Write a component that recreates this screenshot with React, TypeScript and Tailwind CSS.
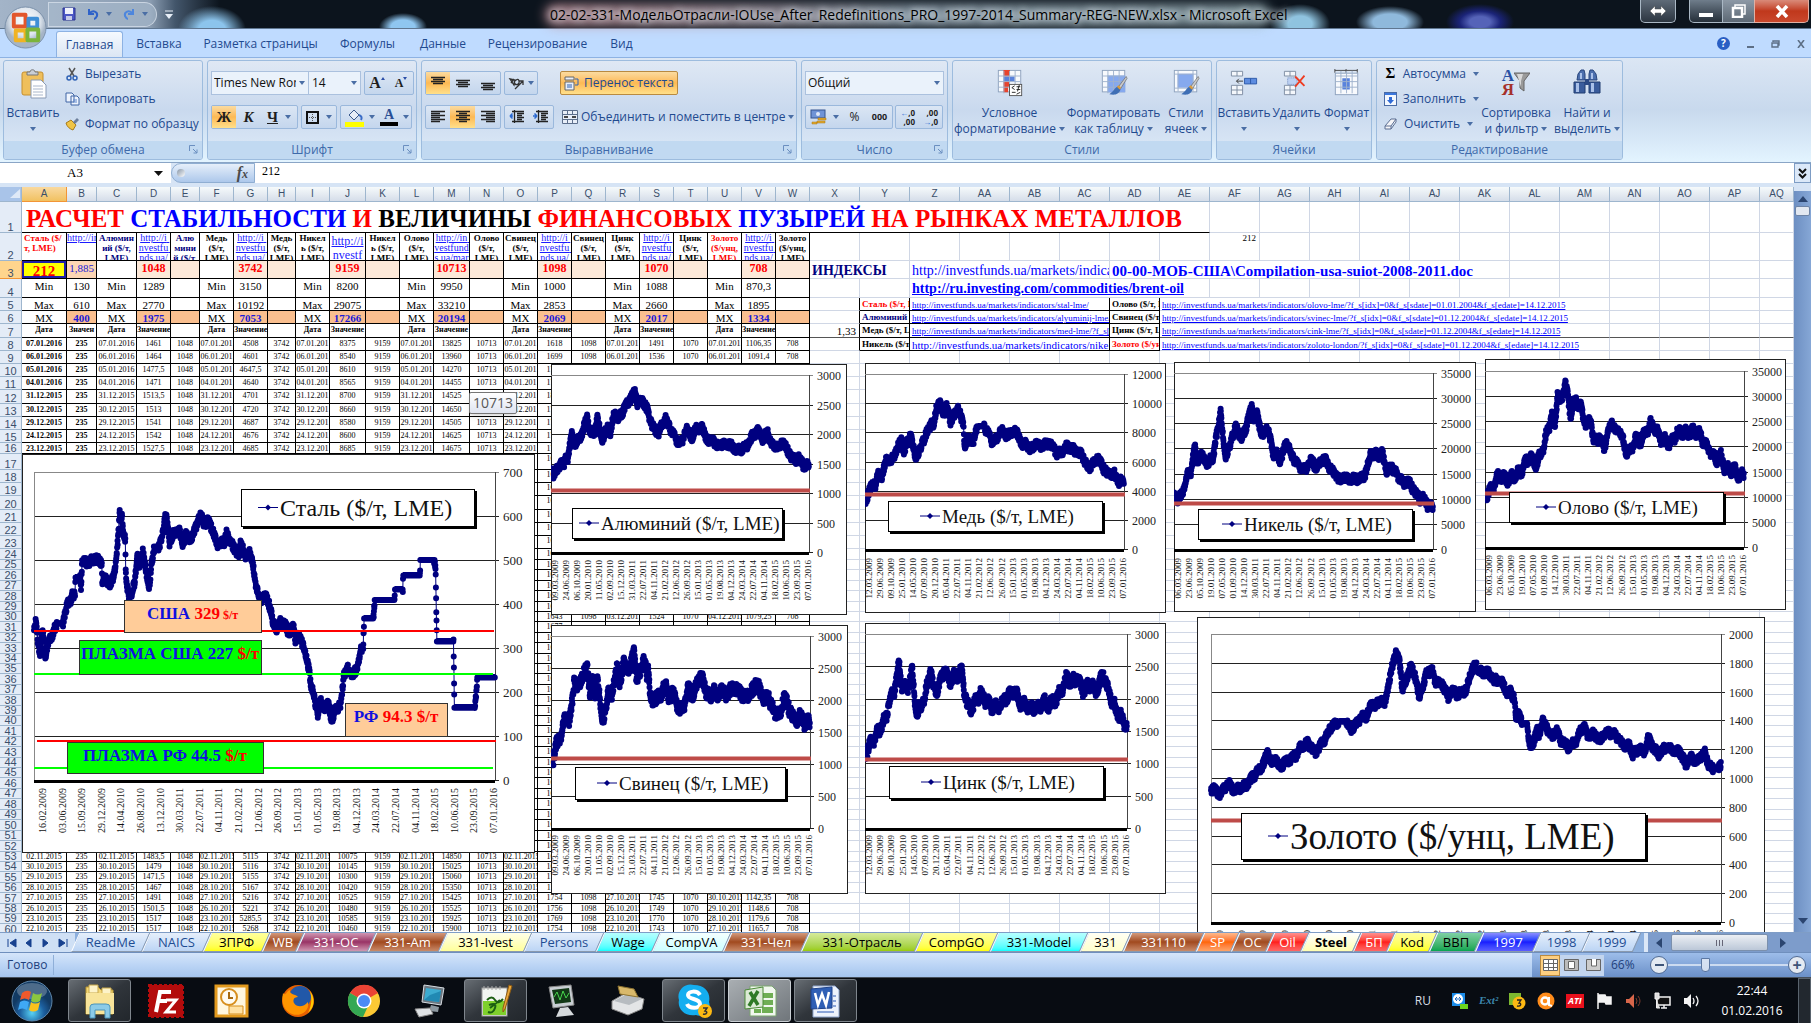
import type { ReactNode } from "react";
import clsx from "clsx";

/* ---------- sheet data ---------- */

const colWidths = [
  "w-[22px]", "w-[45px]", "w-[30px]", "w-[40px]", "w-[34px]", "w-[29px]", "w-[34px]", "w-[34px]", "w-[28px]",
  "w-[34px]", "w-[36px]", "w-[34px]", "w-[34px]", "w-[36px]", "w-[34px]", "w-[34px]", "w-[34px]", "w-[34px]",
  "w-[34px]", "w-[34px]", "w-[34px]", "w-[34px]", "w-[34px]", "w-[34px]",
];

const letters = "ABCDEFGHIJKLMNOPQRSTUVWXYZ".split("");
const columns = [...letters, ...letters.slice(0, 17).map((l) => "A" + l)];

const rowHeights = [
  31, 28, 18, 19, 13, 13, 14, 13, 13, 13, 13, 14, 13, 13, 13, 11, 16, 13, 13, 14, 13, 13, 13, 11,
  10, 11, 10, 11, 10, 10, 11, 10, 11, 10, 10, 11, 10, 11, 10, 10, 11, 10, 11, 10, 10, 11, 10, 11, 10, 11, 10, 11,
  10, 10, 11, 10, 11, 10, 10, 11,
];

const topDates = ["07.01.2016", "06.01.2016", "05.01.2016", "04.01.2016", "31.12.2015", "30.12.2015", "29.12.2015", "24.12.2015", "23.12.2015"];
const topValues: Record<string, string[]> = {
  D: ["1461", "1464", "1477,5", "1471", "1513,5", "1513", "1541", "1542", "1527,5"],
  G: ["4508", "4601", "4647,5", "4640", "4701", "4720", "4687", "4676", "4685"],
  J: ["8375", "8540", "8610", "8565", "8700", "8660", "8580", "8600", "8685"],
  M: ["13825", "13960", "14270", "14455", "14525", "14650", "14505", "14625", "14675"],
  P: ["1618", "1699", "1741", "1765", "1801", "1797", "1734", "1709", "1712"],
  S: ["1491", "1536"],
  V: ["1106,35", "1091,4"],
};

const lowDates = ["02.11.2015", "30.10.2015", "29.10.2015", "28.10.2015", "27.10.2015", "26.10.2015", "23.10.2015", "22.10.2015"];
const lowValues: Record<string, string[]> = {
  D: ["1483,5", "1479", "1471,5", "1467", "1491", "1501,5", "1517", "1517"],
  G: ["5115", "5116", "5155", "5167", "5216", "5221", "5285,5", "5268"],
  J: ["10075", "10145", "10300", "10420", "10525", "10480", "10585", "10460"],
  M: ["14850", "15025", "15060", "15350", "15425", "15525", "15925", "15900"],
  P: ["1680", "1690", "1702", "1711", "1754", "1756", "1769", "1754"],
  S: ["", "", "", "", "1745", "1749", "1770", "1743"],
  V: ["", "", "", "", "1142,35", "1148,6", "1179,6", "1165,7"],
};

const constants: Record<string, string> = { B: "235", E: "1048", H: "3742", K: "9159", N: "10713", Q: "1098", T: "1070", W: "708" };
const rowThirty: Record<string, string> = { P: "1643", Q: "1098", R: "03.12.201", S: "1524", T: "1070", U: "04.12.2015", V: "1079,25", W: "708" };

const headings: Record<string, string> = {
  A: "Сталь ($/т,\u00a0LME)", B: "http://in", C: "Алюмин ий ($/т, LME)", D: "http://i nvestfu nds.ua/", E: "Алю мини й ($/т,",
  F: "Медь ($/т, LME)", G: "http://i nvestfu nds.ua/", H: "Медь ($/т, LME)", I: "Никел ь ($/т, LME)", J: "http://i nvestf",
  K: "Никел ь ($/т, LME)", L: "Олово ($/т, LME)", M: "http://in vestfund s.ua/mar", N: "Олово ($/т, LME)", O: "Свинец ($/т, LME)",
  P: "http://i nvestfu nds.ua/", Q: "Свинец ($/т, LME)", R: "Цинк ($/т, LME)", S: "http://i nvestfu nds.ua/", T: "Цинк ($/т, LME)",
  U: "Золото ($/унц, LME)", V: "http://i nvestfu nds.ua/", W: "Золото ($/унц, LME)",
};

const targets: Record<string, string> = { B: "1,885", D: "1048", G: "3742", J: "9159", M: "10713", P: "1098", S: "1070", V: "708" };
const minimums: Record<string, string> = { B: "130", D: "1289", G: "3150", J: "8200", M: "9950", P: "1000", S: "1088", V: "870,3" };
const maximums: Record<string, string> = { B: "610", D: "2770", G: "10192", J: "29075", M: "33210", P: "2853", S: "2660", V: "1895" };
const means: Record<string, string> = { B: "400", D: "1975", G: "7053", J: "17266", M: "20194", P: "2069", S: "2017", V: "1334" };

const labelCols = "ACFILORU";
const valueCols = "BDGJMPSV";
const levelCols = "EHKNQTW";

const base = "http://investfunds.ua/markets/indicators/";
const indexLinks = [
  { a: "Сталь ($/т, LME)", aClass: "text-[#f00]", b: base + "stal-lme/", c: "Олово ($/т, LME)", cClass: "", d: base + "olovo-lme/?f_s[idx]=0&f_s[sdate]=01.01.2004&f_s[edate]=14.12.2015" },
  { a: "Алюминий ($/т)", aClass: "text-[#000080]", b: base + "alyuminij-lme/?f_s[idx]=0", c: "Свинец ($/т, LME)", cClass: "", d: base + "svinec-lme/?f_s[idx]=0&f_s[sdate]=01.12.2004&f_s[edate]=14.12.2015" },
  { a: "Медь ($/т, LME)", aClass: "", b: base + "med-lme/?f_s[idx]=0", c: "Цинк ($/т, LME)", cClass: "", d: base + "cink-lme/?f_s[idx]=0&f_s[sdate]=01.12.2004&f_s[edate]=14.12.2015" },
  { a: "Никель ($/т, LME)", aClass: "", b: base + "nikel-lme/?f_s[idx]=0", c: "Золото ($/унц)", cClass: "text-[#f00]", d: base + "zoloto-london/?f_s[idx]=0&f_s[sdate]=01.12.2004&f_s[edate]=14.12.2015" },
];

/* ---------- sheet cells ---------- */

function cellContent(col: string, row: number): { text: string; cls: string; link?: boolean } {
  const isLabel = labelCols.includes(col);
  const isValue = valueCols.includes(col);
  if (row === 2) {
    if (isValue) return { text: headings[col], link: true, cls: col === "J" ? "text-[12px] leading-[14px] pt-[1px]" : "text-[10px] leading-[10px] whitespace-pre-wrap" };
    return {
      text: headings[col],
      cls: clsx("text-[9px] leading-[10px] font-bold", col === "A" && "text-left pl-[2px]", "AU".includes(col) && "text-[#f00]", "CE".includes(col) && "text-[#000080]"),
    };
  }
  if (row === 3) {
    if (col === "A") return { text: "212", cls: "pt-[2px] text-[15px] leading-[17px] font-bold text-[#f00]" };
    if (col === "B") return { text: "1,885", cls: "text-[11px] leading-[14px] text-[#1b1bd8]" };
    return { text: targets[col] ?? "", cls: "text-[12px] leading-[15px] font-bold text-[#f00]" };
  }
  if (row === 4) return { text: isLabel ? "Min" : minimums[col] ?? "", cls: "text-[11px] leading-[15px]" };
  if (row === 5) return { text: isLabel ? "Max" : maximums[col] ?? "", cls: "text-[11px] leading-[15px]" };
  if (row === 6) return { text: isLabel ? "MX" : means[col] ?? "", cls: clsx("text-[11px] leading-[15px]", isValue && "font-bold text-[#1b1bd8]") };
  if (row === 7) return { text: isLabel ? "Дата" : isValue ? (col === "B" ? "Значен" : "Значение") : "", cls: "text-[8px] leading-[11px] font-bold" };

  const bold = col === "A" || (col === "B" && row < 17);
  const cls = clsx("text-[8px] leading-[11px]", bold && "font-bold");
  if (row < 17) {
    const i = row - 8;
    if (isLabel) return { text: "AC".includes(col) ? topDates[i] : topDates[i].slice(0, 9), cls };
    return { text: constants[col] ?? topValues[col]?.[i] ?? "", cls };
  }
  if (row > 52) {
    const i = row - 53;
    const small = "text-[8px] leading-[10px]";
    if (col === "U") return { text: ["", "", "", "", "30.10.2015", "29.10.2015", "28.10.2015", "27.10.2015"][i], cls: small };
    if (isLabel) return { text: lowDates[i], cls: small };
    return { text: constants[col] ?? lowValues[col]?.[i] ?? "", cls: small };
  }
  if (row === 30 && rowThirty[col]) return { text: rowThirty[col], cls: "text-[8px] leading-[10px]" };
  if (col === "P") return { text: String(1610 + ((row * 37) % 90)), cls: "text-[8px] leading-[10px]" };
  return { text: "", cls: "" };
}

function fillFor(col: string, row: number) {
  if (row === 3) {
    if (col === "A") return "bg-[#ff0] shadow-[inset_0_0_0_2px_#1f1fa8]";
    if (col === "B") return "bg-[#fcd5b4]";
    if ((valueCols + levelCols).includes(col)) return "bg-[#fde9d9]";
  }
  if (row === 6 && (valueCols + levelCols).includes(col)) return "bg-[#fabf8f]";
  return "bg-white";
}

function Clip({ h, className, children }: { h: number; className?: string; children?: ReactNode }) {
  return <div style={{ height: h - 1 }} className={clsx("overflow-hidden", className)}>{children}</div>;
}

function BlankCells({ from, to, h, frozen }: { from: number; to: number; h: number; frozen?: boolean }) {
  return (
    <>
      {columns.slice(from, to).map((c) => (
        <td key={c} className={clsx("border-r border-b border-r-[#d0d7e5]", frozen ? "border-b-[#555]" : "border-b-[#d0d7e5]")}>
          <Clip h={h} />
        </td>
      ))}
    </>
  );
}

// columns X and onward (index 23)
function RightCells({ row, h }: { row: number; h: number }) {
  const frozen = row === 7;
  const line = "border-r border-b border-[#d0d7e5]";
  if (row === 2) {
    return (
      <>
        <BlankCells from={23} to={31} h={h} />
        <td className={line}><Clip h={h} className="pr-[3px] text-right text-[9px] leading-[10px]">212</Clip></td>
        <BlankCells from={32} to={43} h={h} />
      </>
    );
  }
  if (row === 3) {
    return (
      <>
        <td colSpan={2} className={line}><Clip h={h} className="pl-[2px] text-[14px] leading-[20px] font-bold whitespace-nowrap text-[#000080]">ИНДЕКСЫ</Clip></td>
        <td colSpan={4} className={line}><Clip h={h} className="pl-[2px] text-[14px] leading-[20px] whitespace-nowrap"><a href="#idx" className="text-[#00f]">http://investfunds.ua/markets/indicat</a></Clip></td>
        <td colSpan={8} className={line}><Clip h={h} className="pl-[2px] text-[15px] leading-[20px] font-bold whitespace-nowrap"><a href="#doc" className="text-[#00f]">00-00-МОБ-США\Compilation-usa-suiot-2008-2011.doc</a></Clip></td>
        <BlankCells from={37} to={43} h={h} />
      </>
    );
  }
  if (row === 4) {
    return (
      <>
        <BlankCells from={23} to={25} h={h} />
        <td colSpan={6} className={line}><Clip h={h} className="pl-[2px] text-[14px] leading-[19px] font-bold whitespace-nowrap"><a href="#brent" className="text-[#00f] underline">http://ru.investing.com/commodities/brent-oil</a></Clip></td>
        <BlankCells from={31} to={43} h={h} />
      </>
    );
  }
  if (row >= 5 && row <= 8) {
    const item = indexLinks[row - 5];
    const dark = "border-r border-b border-black";
    return (
      <>
        <td className={clsx("border-r border-r-black border-b", frozen ? "border-b-[#555]" : "border-b-[#d0d7e5]")}>
          <Clip h={h} className="pr-[3px] text-right text-[11px] leading-[15px]">{frozen && "1,33"}</Clip>
        </td>
        <td className={dark}><Clip h={h} className={clsx("pl-[2px] text-[9px] leading-[13px] font-bold whitespace-nowrap", item.aClass)}>{item.a}</Clip></td>
        <td colSpan={4} className={dark}>
          <Clip h={h} className={clsx("pl-[2px] whitespace-nowrap", row === 8 ? "text-[11px] leading-[15px]" : "text-[9px] leading-[14px]")}><a href="#a" className="text-[#00f] underline">{item.b}</a></Clip>
        </td>
        <td className={dark}><Clip h={h} className={clsx("pl-[2px] text-[9px] leading-[13px] font-bold whitespace-nowrap", item.cClass)}>{item.c}</Clip></td>
        <td colSpan={9} className={clsx("border-r border-b border-r-[#d0d7e5]", frozen ? "border-b-[#555]" : "border-b-[#d0d7e5]")}>
          <Clip h={h} className="pl-[2px] text-[9px] leading-[14px] whitespace-nowrap"><a href="#b" className="text-[#00f] underline">{item.d}</a></Clip>
        </td>
        <BlankCells from={39} to={43} h={h} frozen={frozen} />
      </>
    );
  }
  return <BlankCells from={23} to={43} h={h} frozen={frozen} />;
}

function SheetTable() {
  return (
    <table className="w-full table-fixed border-separate border-spacing-0 font-['Liberation_Serif','Times_New_Roman',serif] text-black">
      <colgroup>
        {colWidths.map((w, i) => <col key={i} className={w} />)}
        {columns.slice(23, 42).map((c) => <col key={c} className="w-[50px]" />)}
        <col />
      </colgroup>
      <thead>
        <tr className="h-[15px] font-['Liberation_Sans',Arial,sans-serif] text-[10px] leading-[14px] text-[#3b4f6b]">
          <th className="border-r border-b border-[#9eb6ce] bg-[#a9c4e9] p-0">
            <svg className="ml-auto block h-[10px] w-[12px]" viewBox="0 0 12 10"><path d="M11 0v9H1z" fill="#dfe9f7" /></svg>
          </th>
          {columns.map((c) => (
            <th key={c} scope="col" className={clsx("border-r border-b p-0 font-normal", c === "A" ? "border-[#f29536] bg-linear-to-b from-[#f9d99f] to-[#f1c15f]" : "border-[#9eb6ce] bg-linear-to-b from-[#f6fafb] to-[#d5dde9]")}>{c}</th>
          ))}
        </tr>
      </thead>
      <tbody>
        {rowHeights.map((h, i) => {
          const row = i + 1;
          return (
            <tr key={row} className="[&>td]:p-0">
              <th
                scope="row"
                className={clsx("border-r border-b p-0 align-bottom font-['Liberation_Sans',Arial,sans-serif] text-[11px] font-normal text-[#3b4f6b]", row === 3 ? "border-[#f29536] bg-[#ffd58d]" : "border-[#9eb6ce] bg-[#e4ecf7]")}
              >
                <div style={{ height: h - 1 }} className="flex items-end justify-center overflow-hidden leading-[10px]">{row}</div>
              </th>
              {row === 1 ? (
                <>
                  <td colSpan={31} className="border-r border-b border-r-[#d0d7e5] border-b-black">
                    <Clip h={h} className="pl-[4px] text-[25px] leading-[34px] font-bold whitespace-nowrap text-[#f00]">
                      РАСЧЕТ <span className="text-[#00f]">СТАБИЛЬНОСТИ</span> И <span className="text-black">ВЕЛИЧИНЫ</span> ФИНАНСОВЫХ <span className="text-[#00f]">ПУЗЫРЕЙ</span> НА РЫНКАХ МЕТАЛЛОВ
                    </Clip>
                  </td>
                  <BlankCells from={31} to={43} h={h} />
                </>
              ) : (
                <>
                  {columns.slice(0, 23).map((c) => {
                    const cell = cellContent(c, row);
                    return (
                      <td key={c} className={clsx("border-r border-b border-black text-center align-top", fillFor(c, row))}>
                        <Clip h={h} className={clsx(row > 2 && "whitespace-nowrap", cell.cls)}>
                          {cell.link ? <a href={"#" + c} className="text-[#1b1bff] underline">{cell.text}</a> : cell.text}
                        </Clip>
                      </td>
                    );
                  })}
                  <RightCells row={row} h={h} />
                </>
              )}
            </tr>
          );
        })}
      </tbody>
    </table>
  );
}

/* ---------- charts ---------- */

type ChartSpec = {
  title: string;
  place: string;
  w: number;
  h: number;
  plot: [number, number, number, number];
  max: number;
  step: number;
  level?: number;
  legend: [number, number, number, number];
  legendText: string;
  legendPad: number;
  tickText?: string;
  dateText?: string;
  dot: number;
  noise: number;
  wave: number;
  dates: string[];
  dateTop: number;
  points: number[];
};

const laterDates = ["22.07.2011", "04.11.2011", "21.02.2012", "12.06.2012", "26.09.2012", "15.01.2013", "01.05.2013", "19.08.2013", "04.12.2013", "24.03.2014", "22.07.2014", "04.11.2014", "18.02.2015", "10.06.2015", "23.09.2015", "07.01.2016"];
const steelDates = ["16.02.2009", "03.06.2009", "15.09.2009", "29.12.2009", "14.04.2010", "26.08.2010", "13.12.2010", "30.03.2011", ...laterDates];
const aluDates = ["09.03.2009", "24.06.2009", "06.10.2009", "20.01.2010", "11.05.2010", "02.09.2010", "15.12.2010", "31.03.2011", ...laterDates];
const copperDates = ["12.03.2009", "29.06.2009", "09.10.2009", "25.01.2010", "14.05.2010", "07.09.2010", "20.12.2010", "05.04.2011", ...laterDates];
const nickelDates = ["06.03.2009", "23.06.2009", "05.10.2009", "19.01.2010", "07.05.2010", "01.09.2010", "14.12.2010", "30.03.2011", ...laterDates];

// points are flat pairs: percent of the time axis, price
const charts: ChartSpec[] = [
  {
    title: "Сталь ($/т, LME)", place: "left-[22px] top-[267px]", w: 513, h: 399, plot: [12, 18, 473, 326], max: 700, step: 100,
    legend: [219, 35, 233, 37], legendText: "text-[24px]", legendPad: 17, tickText: "text-[13px]", dateText: "text-[10px]", dot: 6, noise: 4, wave: 1, dates: steelDates, dateTop: 334,
    points: [0, 340, 0.4, 360, 0.8, 320, 1.3, 285, 1.9, 340, 2.5, 275, 3, 310, 4, 330, 5, 355, 6.3, 355, 6.8, 385, 7.2, 400, 8, 405, 8.3, 425, 8.9, 420, 9, 460, 10, 460, 10.2, 435, 10.4, 490, 10.8, 500, 12, 492, 12.7, 503, 14.7, 497, 14.8, 450, 15.5, 460, 16.4, 440, 17.3, 465, 17.9, 500, 18.3, 560, 18.6, 608, 19.1, 600, 19.3, 565, 19.8, 545, 19.9, 470, 20.2, 440, 20.7, 415, 21.3, 425, 21.8, 450, 22.4, 510, 22.9, 480, 23.6, 520, 24.2, 480, 24.6, 455, 25, 440, 25.5, 490, 26, 520, 27.3, 532, 28, 565, 28.5, 602, 29, 580, 29.4, 540, 30.3, 560, 31.5, 568, 32.2, 535, 33, 560, 33.7, 545, 34.9, 565, 35.6, 592, 36.1, 602, 37, 580, 37.7, 592, 38.7, 570, 39.7, 535, 41.3, 540, 41.8, 572, 42.2, 545, 43, 538, 44.3, 507, 44.8, 538, 45.8, 510, 46.8, 515, 47.5, 490, 48, 450, 48.5, 425, 48.8, 405, 50.3, 418, 51, 400, 51.8, 360, 52.6, 340, 53.3, 360, 54.5, 352, 55.2, 335, 56.3, 345, 56.7, 320, 57.5, 332, 58.6, 300, 59.2, 270, 59.7, 250, 60.1, 215, 60.8, 185, 61.6, 150, 62.1, 180, 63.1, 165, 63.9, 172, 64.6, 135, 65.4, 160, 66.5, 172, 67, 215, 67.2, 240, 68, 252, 69.1, 240, 70.1, 250, 70.5, 275, 70.8, 293, 71.4, 300, 71.6, 367, 73.6, 367, 73.9, 409, 78.2, 409, 78.3, 433, 80, 433, 80.1, 465, 83.7, 465, 83.8, 500, 86.8, 500, 87.1, 485, 87.4, 315, 91, 315, 91.2, 164, 95.6, 164, 96.2, 233, 100, 233],
  },
  {
    title: "Алюминий ($/т, LME)", place: "left-[551px] top-[177px]", w: 296, h: 251, plot: [0, 11, 258, 188], max: 3000, step: 500, level: 1048,
    legend: [21, 144, 210, 30], legendText: "text-[19px]", legendPad: 7, dot: 6, noise: 4, wave: 1, dates: aluDates, dateTop: 196,
    points: [0, 1400, 1, 1320, 3, 1420, 4, 1550, 5, 1430, 5.5, 1620, 6.5, 1570, 8, 1990, 9.5, 1830, 12, 2000, 14, 2290, 15, 2020, 17, 2050, 18, 2260, 20, 1900, 22, 2130, 23, 2020, 24.5, 2350, 26, 2270, 28, 2400, 30, 2550, 32.5, 2700, 33.5, 2530, 35.5, 2570, 37.5, 2380, 39, 2170, 41.5, 2000, 44.5, 2270, 46, 2100, 49, 1870, 51, 1860, 52.5, 2110, 54.5, 1930, 56, 2090, 58.5, 2100, 61, 1870, 63, 1890, 64, 1800, 68, 1850, 72.5, 1720, 76, 1810, 78, 1960, 80, 2050, 82, 1920, 84, 2020, 85.5, 1820, 88.5, 1770, 90, 1870, 91.5, 1720, 94.5, 1550, 96, 1590, 98, 1460, 99.5, 1490, 100, 1470],
  },
  {
    title: "Медь ($/т, LME)", place: "left-[865px] top-[176px]", w: 301, h: 250, plot: [0, 11, 259, 186], max: 12000, step: 2000, level: 3742,
    legend: [23, 138, 214, 30], legendText: "text-[19px]", legendPad: 32, dot: 6, noise: 4, wave: 1, dates: copperDates, dateTop: 195,
    points: [0, 3300, 1.5, 3900, 3.5, 4600, 4, 4300, 5, 5100, 6.5, 4900, 8.5, 6300, 10, 6000, 12, 6700, 14, 7500, 15, 6500, 16, 7200, 17.5, 7800, 19.5, 6400, 21, 6600, 22, 7300, 23, 7600, 25, 8400, 26, 8700, 26.5, 8400, 27.5, 9700, 29, 9950, 30.5, 9300, 31.5, 9700, 33, 8800, 34.5, 9200, 36, 9700, 37, 9000, 38, 8500, 38.5, 7000, 40, 7600, 42, 7400, 43.5, 8400, 46, 8400, 47.5, 7900, 49, 7400, 51, 7500, 52.5, 8200, 54.5, 7800, 57, 8000, 58, 8100, 60, 7500, 61, 7000, 62, 7300, 63.5, 6800, 66, 7200, 68.5, 7100, 71, 7250, 73, 6900, 74, 6550, 76, 6700, 78, 7050, 81, 6750, 83.5, 6500, 85, 6000, 86, 5550, 88, 5800, 90, 6250, 91.5, 5700, 94, 5100, 96, 5200, 98, 4600, 99, 4700, 100, 4550],
  },
  {
    title: "Никель ($/т, LME)", place: "left-[1174px] top-[175px]", w: 302, h: 250, plot: [0, 11, 259, 187], max: 35000, step: 5000, level: 9159,
    legend: [24, 147, 214, 30], legendText: "text-[19px]", legendPad: 24, dot: 6, noise: 4, wave: 1, dates: nickelDates, dateTop: 196,
    points: [0, 11000, 1.5, 9600, 3, 11000, 4.5, 13000, 5.5, 15500, 6.5, 15000, 8, 20500, 9, 17500, 11, 18800, 13, 16500, 14, 18200, 15, 17500, 16.5, 23000, 18, 27000, 19, 22000, 20, 18500, 21, 19500, 22.5, 22500, 24, 24200, 26, 22000, 28, 24500, 30, 28500, 31, 25500, 32, 26800, 34, 22500, 36, 24200, 37.5, 21000, 38.5, 18500, 39.5, 19300, 41, 17500, 43.5, 21200, 45.5, 18500, 48, 16500, 51, 15600, 53, 18000, 54.5, 16200, 58, 18000, 61, 15500, 64, 13700, 65.5, 14300, 68, 14000, 71, 13900, 73.5, 14500, 75, 17000, 76, 19200, 77, 18400, 78, 19000, 79, 18500, 80.5, 19000, 82, 15400, 84, 16300, 86, 14900, 89, 12700, 90, 13700, 92.5, 11800, 95, 9900, 96.5, 10100, 98, 8600, 100, 8500],
  },
  {
    title: "Олово ($/т, LME)", place: "left-[1485px] top-[172px]", w: 301, h: 251, plot: [0, 12, 259, 188], max: 35000, step: 5000, level: 10713,
    legend: [24, 133, 214, 30], legendText: "text-[19px]", legendPad: 27, dot: 6, noise: 4, wave: 3, dates: nickelDates, dateTop: 196,
    points: [0, 10500, 2, 11000, 5, 14000, 9, 13500, 14, 15000, 17, 18000, 20, 16500, 22, 19000, 26, 26500, 27, 24500, 28, 30500, 29, 28500, 31, 32500, 33, 26500, 35, 29500, 37, 27500, 39, 24500, 41, 25000, 42, 20500, 44, 22000, 46, 19800, 49, 25000, 50.5, 22500, 52, 23500, 54, 19500, 56, 18800, 58, 21500, 60, 21000, 64, 24500, 66, 23500, 68, 21500, 72, 20500, 74, 23000, 77, 22600, 82, 23000, 85, 20500, 89, 17500, 91, 18000, 93, 15300, 96, 15500, 98, 14300, 100, 14200],
  },
  {
    title: "Свинец ($/т, LME)", place: "left-[551px] top-[438px]", w: 297, h: 269, plot: [0, 11, 259, 203], max: 3000, step: 500, level: 1098,
    legend: [24, 142, 210, 32], legendText: "text-[19px]", legendPad: 22, dot: 6, noise: 6, wave: 1, dates: aluDates, dateTop: 210,
    points: [0, 1150, 1, 1080, 2, 1300, 4, 1450, 5.5, 1750, 7, 1650, 8, 1900, 9, 2350, 10, 2200, 12, 2350, 14, 2520, 15, 2050, 16, 2280, 17, 2130, 18, 2300, 20, 1680, 21, 1800, 22, 2130, 23.5, 2070, 25.5, 2520, 26.5, 2250, 28, 2600, 29, 2480, 30.5, 2520, 32, 2740, 33, 2350, 34.5, 2450, 36, 2670, 37, 2380, 37.5, 2450, 38.5, 2050, 39.5, 1970, 41.5, 2090, 42.5, 1980, 43.5, 2250, 44.5, 2200, 45.5, 2020, 47, 2120, 49.5, 1840, 51.5, 1880, 53, 2240, 54.5, 2050, 56, 2230, 58, 2380, 60, 2120, 62, 2030, 63, 2160, 64, 2050, 66, 2170, 67.5, 2090, 69, 2150, 71, 2190, 74.5, 2060, 77, 2100, 79, 2240, 80, 2210, 82, 2020, 84, 2040, 86, 1820, 88.5, 1750, 90, 2070, 92, 1850, 94.5, 1670, 96.5, 1760, 98, 1620, 99.5, 1700, 100, 1640],
  },
  {
    title: "Цинк ($/т, LME)", place: "left-[865px] top-[436px]", w: 301, h: 271, plot: [0, 11, 262, 205], max: 3000, step: 500, level: 1070,
    legend: [24, 143, 214, 32], legendText: "text-[19px]", legendPad: 32, dot: 6, noise: 5, wave: 3, dates: copperDates, dateTop: 212,
    points: [0, 1150, 3, 1350, 6, 1550, 8, 1700, 9, 1950, 11, 2100, 13, 2530, 14, 2200, 16, 2150, 18, 2420, 19, 2000, 20, 1750, 22, 1950, 23, 2050, 25, 2450, 26, 2200, 28, 2150, 30, 2450, 32, 2280, 34, 2350, 37, 2400, 38, 2100, 39, 1900, 41, 1850, 44, 2080, 46, 1980, 48, 1880, 51, 1850, 54, 2030, 57, 2120, 59, 1950, 61, 1900, 63, 1850, 66, 1860, 68, 1960, 70, 1900, 73, 2000, 75, 2150, 77, 2320, 79, 2250, 81, 2330, 83, 2120, 86, 2230, 88, 2100, 89, 2200, 91, 2370, 93, 2100, 94, 2000, 96, 1800, 98, 1700, 100, 1550],
  },
  {
    title: "Золото ($/унц, LME)", place: "left-[1197px] top-[430px]", w: 568, h: 330, plot: [14, 17, 524, 305], max: 2000, step: 200, level: 708,
    legend: [44, 196, 404, 46], legendText: "text-[37px]", legendPad: 27, dot: 6, noise: 4, wave: 1, dates: steelDates, dateTop: 313,
    points: [0, 920, 0.5, 930, 1.5, 880, 2.5, 920, 3.5, 965, 4, 930, 5, 920, 7, 950, 8, 1000, 9.5, 1060, 10.5, 1110, 11, 1185, 12, 1100, 12.7, 1130, 13.5, 1080, 14.5, 1110, 16.5, 1150, 17.5, 1215, 19, 1240, 20.5, 1180, 22, 1250, 23.5, 1350, 25, 1390, 26.5, 1390, 27.5, 1340, 29.5, 1420, 30.5, 1430, 31.5, 1515, 32, 1500, 33.5, 1540, 34, 1510, 34.5, 1600, 35, 1680, 35.8, 1820, 36.3, 1870, 37, 1800, 37.5, 1620, 38.2, 1670, 39, 1780, 40, 1710, 40.5, 1620, 40.8, 1560, 41.8, 1670, 42.3, 1730, 43.3, 1750, 44, 1670, 45.5, 1645, 46.5, 1560, 47.2, 1610, 48.3, 1580, 50, 1610, 50.7, 1700, 51.4, 1765, 52, 1780, 53.3, 1720, 54, 1740, 55.5, 1680, 57, 1670, 58, 1595, 58.7, 1600, 59.5, 1550, 59.8, 1410, 60.5, 1460, 61, 1380, 62, 1380, 62.4, 1240, 62.7, 1210, 64, 1330, 64.3, 1290, 65, 1400, 66.2, 1330, 67, 1285, 67.6, 1340, 68.5, 1265, 70, 1215, 71.6, 1260, 72.4, 1320, 73.2, 1360, 73.8, 1295, 75, 1305, 76.3, 1265, 77.7, 1325, 79.4, 1295, 81.2, 1215, 82, 1235, 82.7, 1160, 84, 1205, 85, 1180, 85.7, 1280, 86.8, 1210, 87.8, 1165, 88.7, 1200, 90, 1205, 91, 1190, 92, 1180, 93, 1095, 94.3, 1145, 95, 1115, 96.8, 1175, 97.5, 1095, 98.5, 1060, 99.5, 1060, 100, 1095],
  },
];

function tracePoints(spec: ChartSpec) {
  const [x0, y0, x1, y1] = spec.plot;
  const out: [number, number][] = [];
  const p = spec.points;
  let seed = 7;
  for (let i = 0; i + 3 < p.length; i += 2) {
    const ax = x0 + (p[i] / 100) * (x1 - x0);
    const bx = x0 + (p[i + 2] / 100) * (x1 - x0);
    const ay = y1 - (p[i + 1] / spec.max) * (y1 - y0);
    const by = y1 - (p[i + 3] / spec.max) * (y1 - y0);
    const flat = p[i + 1] === p[i + 3];
    const n = Math.max(1, Math.round((bx - ax) / 0.2));
    for (let k = 0; k < n; k++) {
      seed = (seed * 1103515245 + 12345) % 2147483648;
      const x = ax + ((bx - ax) * k) / n;
      const jitter = (seed / 2147483648 - 0.5) * 2 * spec.noise + Math.sin(x * 0.9) * spec.wave;
      out.push([x, ay + ((by - ay) * k) / n + (flat ? 0 : jitter)]);
    }
  }
  return out;
}

const steelBoxes = [
  { x: 102, y: 146, w: 137, h: 32, fill: "#ffcc99", a: "США ", b: "329", c: " $/т", small: "text-[12px]" },
  { x: 57, y: 186, w: 182, h: 34, fill: "#00ff00", a: "ПЛАЗМА США 227 ", b: "$/т", c: "", small: "" },
  { x: 323, y: 249, w: 102, h: 33, fill: "#ffcc99", a: "РФ ", b: "94.3 $/т", c: "", small: "" },
  { x: 45, y: 288, w: 196, h: 31, fill: "#00ff00", a: "ПЛАЗМА РФ 44.5 ", b: "$/т", c: "", small: "" },
];

function SteelMarks() {
  return (
    <g>
      <path d="M12 177H472M15 287H474" stroke="#f00" strokeWidth="2" />
      <path d="M12 220H471M12 314H471" stroke="#0f0" strokeWidth="2" />
      {steelBoxes.map((b) => (
        <g key={b.a}>
          <rect x={b.x + 0.5} y={b.y + 0.5} width={b.w} height={b.h} fill={b.fill} stroke="#333" />
          <text x={b.x + b.w / 2} y={b.y + 19} textAnchor="middle" fill="#1010e0" className="text-[17px] font-bold whitespace-pre">
            {b.a}<tspan fill="#f00">{b.b}</tspan><tspan fill="#f00" className={b.small}>{b.c}</tspan>
          </text>
        </g>
      ))}
    </g>
  );
}

function PriceChart({ spec }: { spec: ChartSpec }) {
  const [x0, y0, x1, y1] = spec.plot;
  const [lx, ly, lw, lh] = spec.legend;
  const ticks = Array.from({ length: spec.max / spec.step + 1 }, (_, i) => i * spec.step);
  const yOf = (v: number) => Math.round(y1 - (v / spec.max) * (y1 - y0)) + 0.5;
  const pts = tracePoints(spec);
  const first = x0 + (x0 > 0 ? 9 : 4);
  const level = spec.level && <path d={`M${x0} ${yOf(spec.level)}H${x1 + 1}`} stroke="#be4b48" strokeWidth="4" />;
  return (
    <svg width={spec.w} height={spec.h} role="img" aria-label={spec.title} className={clsx("absolute font-['Liberation_Serif','Times_New_Roman',serif]", spec.place)}>
      <rect x="0.5" y="0.5" width={spec.w - 1} height={spec.h - 1} fill="#fff" stroke="#222" />
      {ticks.map((t) => (
        <g key={t}>
          <path d={`M${x0} ${yOf(t)}H${x1 + 4}`} stroke={t === spec.max ? "#888" : "#222"} />
          <text x={x1 + 8} y={yOf(t) + 4} className={spec.tickText ?? "text-[12px]"} fill="#222">{t}</text>
        </g>
      ))}
      <path d={`M${x1 + 0.5} ${y0}V${y1}`} stroke="#444" />
      {x0 > 0 && <path d={`M${x0 + 0.5} ${y0}V${y1}`} stroke="#888" />}
      <path d={`M${x0} ${y1 + 1.5}H${x1}`} stroke="#000" strokeWidth="3" />
      <polyline points={pts.map(([x, y]) => x.toFixed(1) + "," + y.toFixed(1)).join(" ")} fill="none" stroke="#000080" />
      <path d={pts.map(([x, y]) => `M${x.toFixed(1)} ${y.toFixed(1)}h0.01`).join("")} stroke="#000080" strokeWidth={spec.dot} strokeLinecap="round" />
      {level}
      {spec.max === 700 && <SteelMarks />}
      <rect x={lx + 2} y={ly + 2} width={lw + 1} height={lh + 1} fill="#000" />
      <rect x={lx + 0.5} y={ly + 0.5} width={lw} height={lh} fill="#fff" stroke="#000" />
      <path d={`M${lx + spec.legendPad} ${ly + lh / 2}h20`} stroke="#000080" />
      <path d={`M${lx + spec.legendPad + 10} ${ly + lh / 2 - 3}l3 3l-3 3l-3 -3z`} fill="#000080" />
      <text x={lx + spec.legendPad + 22} y={ly + lh / 2} dominantBaseline="central" className={spec.legendText} fill="#111">{spec.title}</text>
      {spec.dates.map((d, i) => {
        const x = first + (i * (x1 - 1 - first)) / (spec.dates.length - 1);
        return <text key={d} transform={`translate(${Math.round(x) + 3} ${spec.dateTop}) rotate(-90)`} textAnchor="end" className={spec.dateText ?? "text-[9px]"} fill="#111">{d}</text>;
      })}
    </svg>
  );
}

/* ---------- ribbon ---------- */

function Caret({ className }: { className?: string }) {
  return <svg viewBox="0 0 6 4" className={clsx("h-[4px] w-[6px] shrink-0", className)}><path d="M0 0h6L3 4z" fill="#4a6ea5" /></svg>;
}

function Group({ title, width, launcher, children }: { title: string; width: string; launcher?: boolean; children: ReactNode }) {
  return (
    <section className={clsx("flex shrink-0 flex-col overflow-hidden rounded-[3px] border border-[#9dbcde] bg-linear-to-b from-[#dfe8f4] via-[#c9d9ee] to-[#dfebf8]", width)}>
      <div className="flex h-[80px] items-start">{children}</div>
      <h2 className="relative h-[18px] bg-[#c1d9f1] text-center text-[12px] leading-[18px] text-[#3e6aaa]">
        {title}
        {launcher && (
          <svg viewBox="0 0 9 9" className="absolute top-[4px] right-[4px] h-[9px] w-[9px]"><path d="M.5 6V.5H6M4 4l4 4M8 4.500V8H4.500" fill="none" stroke="#6b8fc0" /></svg>
        )}
      </h2>
    </section>
  );
}

const boxed = "flex h-[24px] rounded-[2px] border border-[#9ab8dc] bg-linear-to-b from-[#dbe6f4] to-[#c4d6ed]";
const tool = "flex h-full items-center justify-center text-[#1e1e1e]";
const active = "bg-linear-to-b from-[#fbdb9f] via-[#fdb953] to-[#ffe08a]";

function Lines({ kind }: { kind: "top" | "mid" | "bot" | "left" | "center" | "right" | "out" | "in" }) {
  const d = {
    top: "M1 2.500h14M3 4.500h10M1 6.500h14M3 8.500h10",
    mid: "M1 5.500h14M3 7.500h10M1 9.500h14M3 11.500h10",
    bot: "M1 8.500h14M3 10.500h10M1 12.500h14M3 14.500h10",
    left: "M1 2.500h14M1 4.500h9M1 6.500h14M1 8.500h9M1 10.500h14M1 12.500h9",
    center: "M1 2.500h14M4 4.500h8M1 6.500h14M4 8.500h8M1 10.500h14M4 12.500h8",
    right: "M1 2.500h14M6 4.500h9M1 6.500h14M6 8.500h9M1 10.500h14M6 12.500h9",
    out: "M3 2.500h12M8 4.500h7M8 6.500h5M8 8.500h7M8 10.500h5M3 12.500h12M5.500 1v13",
    in: "M3 2.500h12M8 4.500h7M8 6.500h5M8 8.500h7M8 10.500h5M3 12.500h12M5.500 1v13",
  }[kind];
  return (
    <svg viewBox="0 0 16 16" className="h-[16px] w-[16px]">
      <path d={d} stroke="#222" strokeWidth="1.300" fill="none" />
      {kind === "out" && <path d="M4 7L1 7m0 0l2.500-2.500M1 7l2.500 2.500" stroke="#2c6bd1" strokeWidth="1.500" />}
      {kind === "in" && <path d="M0 7h4m0 0L1.500 4.500M4 7L1.500 9.500" stroke="#2c6bd1" strokeWidth="1.500" />}
    </svg>
  );
}

function GridIcon({ kind }: { kind: "cond" | "table" | "styles" | "insert" | "delete" | "format" }) {
  if (kind === "insert" || kind === "delete") {
    return (
      <svg viewBox="0 0 30 30" className="h-[28px] w-[30px]">
        <g fill="#f4f7fb" stroke="#7c8ba0"><path d="M1.500 2.500h12v5h-12zM7.500 2.500v5M1.500 17.500h12v10h-12zM7.500 17.500v10M1.500 22.500h12" /></g>
        {kind === "insert" ? (
          <g><path d="M15.500 10h13v6h-13z" fill="#5d8ce0" stroke="#2d59a8" /><path d="M22 10v6" stroke="#2d59a8" /><path d="M14 13H7m0 0l2.500-2.500M7 13l2.500 2.500" stroke="#333" fill="none" /></g>
        ) : (
          <g><path d="M5 9.500h10v7H5z" fill="#bcd0f2" stroke="#6a86ba" strokeDasharray="1 1" /><path d="M13 8l10 10M23 7L13 19" stroke="#ee3d22" strokeWidth="2" /></g>
        )}
      </svg>
    );
  }
  return (
    <svg viewBox="0 0 30 30" className="h-[28px] w-[30px]">
      {kind === "format" && <path d="M2 1.500h24M2 0v4M14 0v4M26 0v4" stroke="#444" />}
      <rect x="2.500" y={kind === "format" ? 4.5 : 1.5} width="24" height="23" fill="#f8fafd" stroke="#8ea2bd" />
      {kind === "cond" && <g><path d="M8 1h7v7H8zM8 13h6v6H8zM8 19h5v6H8z" fill="#e8432d" /><path d="M8 8h12v5H8z" fill="#5a83dc" /></g>}
      {kind === "table" && <path d="M8 7h19v18H8z" fill="#86a9ee" />}
      {kind === "styles" && <path d="M6 5h17v15H6z" fill="#86a9ee" />}
      {kind === "format" && <path d="M10 10h8v12h-8z" fill="#5a83dc" />}
      <path d={kind === "styles" ? "M6.500 2v22M22.500 2v22M3 5.500h23M3 20.500h23" : "M8.500 2v24M14.500 2v24M20.500 2v24M3 7.500h23M3 13.500h23M3 19.500h23"} stroke="#9eb1cc" />
      {kind === "cond" && <g><rect x="14.500" y="16.500" width="13" height="12" fill="#fff" stroke="#555" /><path d="M20 18l-3 2 3 2M17 25h4M22 19h4M22 22h4M25 17l-2 7M22 27l4-2" stroke="#222" fill="none" /></g>}
      {(kind === "table" || kind === "styles") && <g><path d="M28 8L19 20l2.500 2L29 10z" fill="#c9c9c9" stroke="#666" strokeWidth=".7" /><path d="M19 19c-3 0-3 4-9 8 5 1 10 1 12-5z" fill="#3f6fb5" /><path d="M18 19l3 3 1.500-2-2.500-2.500z" fill="#d99b3a" /></g>}
    </svg>
  );
}

function BigTool({ icon, lines, width, caret = "below" }: { icon: ReactNode; lines: string[]; width: string; caret?: "below" | "inline" }) {
  return (
    <button type="button" className={clsx("flex h-full flex-col items-center pt-[8px] text-[12px] leading-[16px] text-[#1f4a8f]", width)}>
      <span className="mb-[2px] block h-[34px]">{icon}</span>
      {lines.map((l, i) => (
        <span key={l} className="flex items-center gap-[3px] whitespace-nowrap">
          {l}
          {caret === "inline" && i === lines.length - 1 && <Caret />}
        </span>
      ))}
      {caret === "below" && <Caret className="mt-[6px]" />}
    </button>
  );
}

function SmallTool({ icon, label, caret }: { icon: ReactNode; label: string; caret?: boolean }) {
  return (
    <button type="button" className="flex h-[25px] items-center gap-[5px] text-[12px] whitespace-nowrap text-[#1f4a8f]">
      <span className="flex w-[16px] justify-center">{icon}</span>
      {label}
      {caret && <Caret className="ml-[2px]" />}
    </button>
  );
}

function Ribbon() {
  return (
    <div className="flex h-[105px] gap-[4px] border-t border-[#8db2e3] bg-linear-to-b from-[#dbe6f4] via-[#c8d9ed] to-[#e3f4ff] px-[3px] pt-[2px] pb-[2px]">
      <Group title="Буфер обмена" width="w-[200px]" launcher>
        <BigTool
          width="w-[58px]"
          lines={["Вставить"]}
          icon={
            <svg viewBox="0 0 28 30" className="h-[30px] w-[28px]">
              <rect x="3" y="3" width="21" height="23" rx="2" fill="#efbf5c" stroke="#c58f2e" />
              <path d="M8 5V3h3c0-3 5-3 5 0h3v3H8z" fill="#c9ced6" stroke="#777" />
              <path d="M12 11h10l5 5v13H12z" fill="#fff" stroke="#8a9bb5" />
              <path d="M14 17h10M14 20h10M14 23h10M14 26h10" stroke="#aab7cb" />
            </svg>
          }
        />
        <div className="flex flex-col pl-[2px]">
          <SmallTool label="Вырезать" icon={<svg viewBox="0 0 12 14" className="h-[14px] w-[12px]"><path d="M3 1l5 8M9 1L4 9" stroke="#555" strokeWidth="1.500" /><circle cx="3" cy="11" r="2" fill="none" stroke="#2f62b5" strokeWidth="1.500" /><circle cx="9" cy="11" r="2" fill="none" stroke="#2f62b5" strokeWidth="1.500" /></svg>} />
          <SmallTool label="Копировать" icon={<svg viewBox="0 0 15 14" className="h-[14px] w-[15px]"><path d="M1 1h6l2 2v7H1zM6 4h6l2 2v7H6z" fill="#eef4fd" stroke="#3f65a5" /><path d="M8 8h4M8 10h4" stroke="#5c86cc" /></svg>} />
          <SmallTool label="Формат по образцу" icon={<svg viewBox="0 0 15 14" className="h-[14px] w-[15px]"><path d="M1 6l5-3 5 5-3 5C5 12 2 10 1 6z" fill="#f0c445" stroke="#a77a1a" /><path d="M8 5l4-4 2 2-4 4z" fill="#6d7f9c" /></svg>} />
        </div>
      </Group>

      <Group title="Шрифт" width="w-[210px]" launcher>
        <div className="flex flex-col gap-[10px] pt-[10px] pl-[3px]">
          <div className="flex h-[24px] gap-[3px]">
            <div className="flex">
              <label className="relative flex">
                <select aria-label="Шрифт" className="w-[98px] appearance-none overflow-hidden border border-[#abc1de] bg-[#eaf2fb] pr-[12px] pl-[2px] text-[12px] text-[#111]"><option>Times New Roman</option></select>
                <Caret className="absolute top-[10px] right-[4px]" />
              </label>
              <label className="relative -ml-px flex">
                <select aria-label="Размер" className="w-[53px] appearance-none border border-[#abc1de] bg-[#eaf2fb] pl-[3px] text-[12px] text-[#111]"><option>14</option></select>
                <Caret className="absolute top-[10px] right-[4px]" />
              </label>
            </div>
            <div className={boxed}>
              <button type="button" aria-label="Увеличить размер" className={clsx(tool, "w-[24px] font-['Liberation_Serif',serif] text-[16px] font-bold")}>A<svg viewBox="0 0 4 3" className="mb-[10px] h-[3px] w-[4px]"><path d="M0 3h4L2 0z" fill="#2c4fa8" /></svg></button>
              <button type="button" aria-label="Уменьшить размер" className={clsx(tool, "w-[24px] font-['Liberation_Serif',serif] text-[12px] font-bold")}>A<svg viewBox="0 0 4 3" className="mb-[10px] h-[3px] w-[4px]"><path d="M0 0h4L2 3z" fill="#2c4fa8" /></svg></button>
            </div>
          </div>
          <div className="flex gap-[3px]">
            <div className={clsx(boxed, "font-['Liberation_Serif',serif] text-[15px] font-bold")}>
              <button type="button" className={clsx(tool, active, "w-[24px]")}>Ж</button>
              <button type="button" className={clsx(tool, "w-[25px] italic")}>К</button>
              <button type="button" className={clsx(tool, "w-[36px] gap-[7px]")}><u>Ч</u><Caret /></button>
            </div>
            <div className={boxed}>
              <button type="button" aria-label="Границы" className={clsx(tool, "w-[34px] gap-[7px]")}>
                <svg viewBox="0 0 13 13" className="h-[13px] w-[13px]"><rect x="1" y="1" width="11" height="11" fill="none" stroke="#111" strokeWidth="2" /><path d="M6.500 3v7M3 6.500h7" stroke="#555" strokeDasharray="1 1" /></svg>
                <Caret />
              </button>
            </div>
            <div className={boxed}>
              <button type="button" aria-label="Заливка" className={clsx(tool, "w-[37px] gap-[5px]")}>
                <svg viewBox="0 0 19 19" className="h-[19px] w-[19px]"><path d="M4 7l5-5 5 5-5 5z" fill="#e6edf7" stroke="#3b5a8c" /><path d="M14 7c3 1 3 3 2 5" stroke="#3b6dc7" strokeWidth="2" fill="none" /><rect x="0" y="14" width="19" height="5" fill="#ff0" /></svg>
                <Caret />
              </button>
              <button type="button" aria-label="Цвет текста" className={clsx(tool, "w-[33px] gap-[5px]")}>
                <span className="flex flex-col items-center font-['Liberation_Serif',serif] text-[14px] leading-[14px] font-bold text-[#2a4f95]">A<span className="h-[4px] w-[18px] bg-black" /></span>
                <Caret />
              </button>
            </div>
          </div>
        </div>
      </Group>

      <Group title="Выравнивание" width="w-[376px]" launcher>
        <div className="flex flex-col gap-[10px] pt-[10px] pl-[3px]">
          <div className="flex gap-[3px]">
            <div className={boxed}>
              <button type="button" aria-label="По верхнему краю" className={clsx(tool, active, "w-[24px]")}><Lines kind="top" /></button>
              <button type="button" aria-label="По середине" className={clsx(tool, "w-[25px]")}><Lines kind="mid" /></button>
              <button type="button" aria-label="По нижнему краю" className={clsx(tool, "w-[25px]")}><Lines kind="bot" /></button>
            </div>
            <div className={boxed}>
              <button type="button" aria-label="Ориентация" className={clsx(tool, "w-[32px] gap-[4px]")}>
                <svg viewBox="0 0 16 14" className="h-[14px] w-[16px]"><path d="M2 3l5 1-1 5zM3 7l3-4M6 6c0 0 4-5 5-1s-4 5-5 1M7 13l8-8M15 9V5h-4" stroke="#333" strokeWidth="1.300" fill="none" /></svg>
                <Caret />
              </button>
            </div>
          </div>
          <div className="flex gap-[3px]">
            <div className={boxed}>
              <button type="button" aria-label="По левому краю" className={clsx(tool, "w-[24px]")}><Lines kind="left" /></button>
              <button type="button" aria-label="По центру" className={clsx(tool, active, "w-[25px]")}><Lines kind="center" /></button>
              <button type="button" aria-label="По правому краю" className={clsx(tool, "w-[25px]")}><Lines kind="right" /></button>
            </div>
            <div className={boxed}>
              <button type="button" aria-label="Уменьшить отступ" className={clsx(tool, "w-[24px]")}><Lines kind="out" /></button>
              <button type="button" aria-label="Увеличить отступ" className={clsx(tool, "w-[24px]")}><Lines kind="in" /></button>
            </div>
          </div>
        </div>
        <div className="mt-[11px] ml-[3px] h-[54px] w-px bg-[#9ab8dc]" />
        <div className="flex flex-col items-start gap-[10px] pt-[10px] pl-[3px]">
          <button type="button" className={clsx("flex h-[24px] items-center gap-[4px] rounded-[2px] border border-[#b98a41] px-[3px] text-[12px] whitespace-nowrap text-[#1f4a8f]", active)}>
            <svg viewBox="0 0 16 15" className="h-[15px] w-[16px]"><path d="M1 1h9v3H1zM1 6h9v8H1z" fill="#e8eef8" stroke="#666" /><path d="M3 9h5M3 11h5M11 3h3v6h-3" stroke="#2f62b5" fill="none" /></svg>
            Перенос текста
          </button>
          <button type="button" className="flex h-[24px] items-center gap-[3px] px-[2px] text-[12px] whitespace-nowrap text-[#1f4a8f]">
            <svg viewBox="0 0 16 14" className="h-[14px] w-[16px]"><path d="M.5.500h15v13H.5zM5.500.500v4M10.500.500v4M5.500 9.500v4M10.500 9.500v4M.5 4.500h15M.5 9.500h15" fill="#e8eef8" stroke="#5d6f8c" /><path d="M2 7h4M10 7h4" stroke="#111" strokeWidth="1.500" /></svg>
            Объединить и поместить в центре
            <Caret />
          </button>
        </div>
      </Group>

      <Group title="Число" width="w-[147px]" launcher>
        <div className="flex flex-col gap-[10px] pt-[10px] pl-[3px]">
          <label className="relative flex h-[24px]">
            <select aria-label="Формат числа" className="w-[139px] appearance-none border border-[#abc1de] bg-[#eaf2fb] pl-[2px] text-[12px] text-[#111]"><option>Общий</option></select>
            <Caret className="absolute top-[10px] right-[4px]" />
          </label>
          <div className="flex gap-[2px] text-[12px]">
            <div className={boxed}>
              <button type="button" aria-label="Финансовый формат" className={clsx(tool, "w-[36px] gap-[6px]")}>
                <svg viewBox="0 0 17 16" className="h-[16px] w-[17px]"><rect x="1" y="1" width="14" height="8" fill="#6f93d6" stroke="#36558f" /><circle cx="8" cy="5" r="2" fill="#dfe8f8" /><path d="M8 9h8v2H8zM7 12h8v2H7zM2 13h5v2H2z" fill="#e2a92e" stroke="#a87410" strokeWidth=".5" /></svg>
                <Caret />
              </button>
              <button type="button" className={clsx(tool, "w-[25px]")}>%</button>
              <button type="button" className={clsx(tool, "w-[25px] text-[9px] font-bold")}>000</button>
            </div>
            <div className={clsx(boxed, "text-[8px] leading-[9px] font-bold")}>
              <button type="button" className={clsx(tool, "w-[23px] flex-col items-end! pr-[4px]")}><span><span className="text-[#2c6bd1]">←</span>,0</span><span>,00</span></button>
              <button type="button" className={clsx(tool, "w-[23px] flex-col items-end! pr-[4px]")}><span>,00</span><span><span className="text-[#2c6bd1]">→</span>,0</span></button>
            </div>
          </div>
        </div>
      </Group>

      <Group title="Стили" width="w-[260px]">
        <BigTool width="w-[113px]" caret="inline" lines={["Условное", "форматирование"]} icon={<GridIcon kind="cond" />} />
        <BigTool width="w-[95px]" caret="inline" lines={["Форматировать", "как таблицу"]} icon={<GridIcon kind="table" />} />
        <BigTool width="w-[50px]" caret="inline" lines={["Стили", "ячеек"]} icon={<GridIcon kind="styles" />} />
      </Group>

      <Group title="Ячейки" width="w-[156px]">
        <BigTool width="w-[54px]" lines={["Вставить"]} icon={<GridIcon kind="insert" />} />
        <BigTool width="w-[51px]" lines={["Удалить"]} icon={<GridIcon kind="delete" />} />
        <BigTool width="w-[49px]" lines={["Формат"]} icon={<GridIcon kind="format" />} />
      </Group>

      <Group title="Редактирование" width="w-[247px]">
        <div className="flex w-[102px] flex-col pl-[6px]">
          <SmallTool caret label="Автосумма" icon={<span className="font-['Liberation_Serif',serif] text-[15px] font-bold text-black">Σ</span>} />
          <SmallTool caret label="Заполнить" icon={<svg viewBox="0 0 13 14" className="h-[14px] w-[13px]"><rect x=".5" y=".5" width="12" height="13" fill="#f4f8fe" stroke="#4a6ba5" /><path d="M1 1h11v2H1z" fill="#3d78dd" /><path d="M5 5h3v3h2l-3.500 4L3 8h2z" fill="#2f6ad6" /></svg>} />
          <SmallTool caret label="Очистить" icon={<svg viewBox="0 0 14 12" className="h-[12px] w-[14px]"><path d="M1 8l6-7h5l-5 7zM1 8v3h6V8M7 11l5-7V1" fill="#f5f5f8" stroke="#5c6f92" /></svg>} />
        </div>
        <BigTool
          width="w-[74px]"
          caret="inline"
          lines={["Сортировка", "и фильтр"]}
          icon={
            <span className="flex font-['Liberation_Serif',serif] font-bold">
              <span className="flex flex-col text-[17px] leading-[14px]"><span className="text-[#2b52a5]">А</span><span className="text-[#a5302b]">Я</span></span>
              <svg viewBox="0 0 16 24" className="h-[24px] w-[16px]"><path d="M0 4h16l-6 8v10l-4-3v-7z" fill="#9a9a9a" stroke="#666" /><path d="M3 5h6l-2 7v6z" fill="#d8d8d8" /></svg>
            </span>
          }
        />
        <BigTool
          width="w-[68px]"
          caret="inline"
          lines={["Найти и", "выделить"]}
          icon={
            <svg viewBox="0 0 28 26" className="h-[26px] w-[28px]">
              <path d="M5 5l3-4h3l1 4v6H4zM23 5l-3-4h-3l-1 4v6h8z" fill="#4c6fae" stroke="#28457c" />
              <path d="M1 13h11v11H1zM16 13h11v11H16z" fill="#3a5c9c" stroke="#213c70" /><path d="M12 10h4v6h-4z" fill="#2c4a85" />
              <path d="M3 14h3v9H3zM18 14h3v9h-3zM7 4h2v6H7zM18 4h2v6h-2z" fill="#a9c0e8" />
            </svg>
          }
        />
      </Group>
    </div>
  );
}

/* ---------- window chrome ---------- */

function TitleBar() {
  return (
    <header className="relative flex h-[29px] items-center border-b border-[#5f7690] bg-[#0c141d] text-[14px]">
      <div className="absolute inset-0 bg-[radial-gradient(ellipse_34px_24px_at_212px_30px,#8cc4ec_40%,transparent),radial-gradient(ellipse_24px_14px_at_403px_27px,#8fc6f0_50%,transparent),radial-gradient(ellipse_30px_20px_at_1300px_24px,#8fc3df_40%,transparent),radial-gradient(ellipse_34px_16px_at_1390px_22px,#8fb9dc_50%,transparent),radial-gradient(ellipse_34px_18px_at_1480px_22px,#5563b8_30%,#1b2478_60%,transparent),linear-gradient(90deg,#a3b4c8_0,#8b9db2_150px,#43566b_175px,transparent_220px)]" />
      <div className="absolute top-[4px] left-[545px] h-[22px] w-[725px] rounded-full bg-linear-to-r from-[#c58d95] via-[#9fb0bd] to-[#9db5bb] opacity-80 blur-[6px]" />
      <div className="relative ml-[48px] flex h-[25px] w-[109px] items-center gap-[11px] rounded-r-full border border-[#dbe4ee]/70 bg-[#aebfd2]/50 pl-[13px]">
        <button type="button" aria-label="Сохранить"><svg viewBox="0 0 14 14" className="h-[14px] w-[14px]"><path d="M1 1h12v12H1z" fill="#4b57c4" stroke="#2a3290" /><path d="M3 1h8v6H3z" fill="#eef1fb" /><path d="M4 9h6v4H4z" fill="#c6cbe8" /></svg></button>
        <button type="button" aria-label="Отменить" className="flex items-center gap-[7px]"><svg viewBox="0 0 12 12" className="h-[12px] w-[12px]"><path d="M2 1v5h5M2 6c4-5 9-2 8 2-1 2-2 3-3 3" fill="none" stroke="#2f62c9" strokeWidth="2" /></svg><Caret /></button>
        <button type="button" aria-label="Вернуть" className="flex items-center gap-[7px]"><svg viewBox="0 0 12 12" className="h-[12px] w-[12px]"><path d="M10 1v5H5M10 6C6 1 1 4 2 8c1 2 2 3 3 3" fill="none" stroke="#4d86dd" strokeWidth="2" /></svg><Caret /></button>
      </div>
      <svg viewBox="0 0 8 9" className="relative ml-[8px] h-[9px] w-[8px]"><path d="M0 1h8" stroke="#e8eff8" /><path d="M0 4h8L4 9z" fill="#e8eff8" /></svg>
      <h1 className="relative ml-[377px] flex-1 text-[14px] whitespace-nowrap text-black [text-shadow:0_0_6px_#dfe8ef,0_0_8px_#dfe8ef]">
        02-02-331-МодельОтрасли-IOUse_After_Redefinitions_PRO_1997-2014_Summary-REG-NEW.xlsx - Microsoft Excel
      </h1>
      <div className="relative flex h-[23px] self-start text-white">
        <button type="button" aria-label="Переместить" className="mr-[13px] flex w-[36px] items-center justify-center rounded-b-[5px] border border-t-0 border-[#aab8c5] bg-linear-to-b from-[#5f6b78] to-[#2c3641]">
          <svg viewBox="0 0 16 10" className="h-[10px] w-[16px]"><path d="M0 5l5-5v3h6V0l5 5-5 5V7H5v3z" fill="#fff" stroke="#555" strokeWidth=".5" /></svg>
        </button>
        <button type="button" aria-label="Свернуть" className="flex w-[34px] items-center justify-center rounded-bl-[5px] border border-t-0 border-[#aab8c5] bg-linear-to-b from-[#6f7d8b] to-[#26303a]"><span className="mt-[8px] h-[4px] w-[14px] bg-white" /></button>
        <button type="button" aria-label="Развернуть" className="flex w-[31px] items-center justify-center border-b border-[#aab8c5] bg-linear-to-b from-[#8d99a6] to-[#5d6975]"><svg viewBox="0 0 15 14" className="h-[14px] w-[15px]"><path d="M4 3V1h10v9h-3" fill="none" stroke="#fff" strokeWidth="1.500" /><path d="M2 4h9v9H2z" fill="none" stroke="#fff" strokeWidth="2.500" /></svg></button>
        <button type="button" aria-label="Закрыть" className="mr-[2px] flex w-[55px] items-center justify-center rounded-br-[5px] border border-t-0 border-[#e0b0a4] bg-linear-to-b from-[#d98a79] via-[#c0381c] to-[#c9472c]">
          <svg viewBox="0 0 14 13" className="h-[13px] w-[14px]"><path d="M2 1l10 11M12 1L2 12" stroke="#fff" strokeWidth="3.500" /></svg>
        </button>
      </div>
    </header>
  );
}

function OfficeButton() {
  return (
    <button type="button" aria-label="Кнопка Office" className="absolute top-[6px] left-[4px] z-10">
      <svg viewBox="0 0 44 44" className="h-[43px] w-[43px]">
        <defs><radialGradient id="orb" cx=".5" cy=".35"><stop offset="0" stopColor="#fff" /><stop offset=".7" stopColor="#dfe6ee" /><stop offset="1" stopColor="#a5b4c6" /></radialGradient></defs>
        <circle cx="22" cy="22" r="21" fill="url(#orb)" stroke="#7b90aa" />
        <g fill="none" strokeWidth="4" strokeLinejoin="round">
          <rect x="10" y="9" width="12" height="12" stroke="#e2562c" /><rect x="25" y="13" width="9" height="9" stroke="#3f8fd6" />
          <rect x="12" y="25" width="10" height="10" stroke="#f0b323" /><rect x="24" y="24" width="11" height="11" stroke="#7bb43a" />
        </g>
      </svg>
    </button>
  );
}

const menuTabs = [
  { label: "Вставка", width: "w-[72px]" },
  { label: "Разметка страницы", width: "w-[131px]" },
  { label: "Формулы", width: "w-[83px]" },
  { label: "Данные", width: "w-[68px]" },
  { label: "Рецензирование", width: "w-[121px]" },
  { label: "Вид", width: "w-[47px]" },
];

function MenuTabs() {
  return (
    <nav className="flex h-[28px] items-end bg-[#bfdbff] pl-[56px] text-[12px] text-[#1f4a8f]">
      <button type="button" className="h-[26px] w-[67px] rounded-t-[3px] border border-b-0 border-[#8db2e3] bg-linear-to-b from-[#f5f9fe] to-[#dbe6f4]">Главная</button>
      {menuTabs.map((t) => <button type="button" key={t.label} className={clsx("h-[26px] whitespace-nowrap", t.width)}>{t.label}</button>)}
      <div className="mr-[6px] mb-[7px] ml-auto flex items-center gap-[17px] text-[#5d6f86]">
        <span className="flex h-[13px] w-[13px] items-center justify-center rounded-full bg-[#2a5fc4] text-[10px] font-bold text-white">?</span>
        <span className="mt-[6px] h-[2px] w-[7px] bg-[#5d6f86]" />
        <svg viewBox="0 0 9 8" className="h-[8px] w-[9px]"><path d="M2 2V1h6v4H7M1 3h6v4H1z" fill="none" stroke="#5d6f86" strokeWidth="1.400" /></svg>
        <svg viewBox="0 0 8 8" className="h-[8px] w-[8px]"><path d="M1 0l6 8M7 0L1 8" stroke="#5d6f86" strokeWidth="1.600" /></svg>
      </div>
    </nav>
  );
}

function FormulaBar() {
  return (
    <div className="flex h-[25px] border-t border-[#8aa5c6] bg-[#d6e4f5] pb-[4px]">
      <div className="flex h-[20px] w-[171px] items-center bg-white">
        <input aria-label="Имя" defaultValue="A3" className="w-[150px] text-center font-['Liberation_Serif',serif] text-[13px] outline-none" />
        <svg viewBox="0 0 9 5" className="ml-[4px] h-[5px] w-[9px]"><path d="M0 0h9L4.500 5z" fill="#111" /></svg>
      </div>
      <div className="flex h-[20px] w-[84px] items-center justify-between rounded-l-full border border-[#8faed2] bg-linear-to-b from-[#e6effa] to-[#adc8eb] pr-[6px] pl-[5px]">
        <span className="h-[8px] w-[8px] rounded-full bg-linear-to-br from-[#8897a8] to-white" />
        <button type="button" className="font-['Liberation_Serif',serif] text-[16px] leading-[18px] font-bold text-[#4a4a4a] italic">f<span className="text-[12px]">x</span></button>
      </div>
      <input aria-label="Строка формул" defaultValue="212" className="h-[20px] flex-1 bg-white pb-[3px] pl-[7px] font-['Liberation_Serif',serif] text-[12px] text-black outline-none" />
      <button type="button" aria-label="Развернуть строку формул" className="flex h-[20px] w-[17px] items-center justify-center border border-[#7d9cc4] bg-[#dbe8f8]">
        <svg viewBox="0 0 9 11" className="h-[11px] w-[9px]"><path d="M1 1l3.500 3.500L8 1M1 6l3.500 3.500L8 6" fill="none" stroke="#111" strokeWidth="2" /></svg>
      </button>
    </div>
  );
}

const sheetTabs = [
  { name: "ReadMe", width: "w-[71px]", fill: "bg-linear-to-b from-[#e6effb] to-[#bcd5f5]", text: "text-[#1e4d93]" },
  { name: "NAICS", width: "w-[61px]", fill: "bg-linear-to-b from-[#e6effb] to-[#bcd5f5]", text: "text-[#1e4d93]" },
  { name: "ЗПРФ", width: "w-[59px]", fill: "bg-linear-to-b from-[#ffff9c] to-[#ffff00]", text: "text-black" },
  { name: "WB", width: "w-[34px]", fill: "bg-linear-to-b from-[#d39a7c] via-[#a14a1e] to-[#c98a68]", text: "text-white" },
  { name: "331-ОС", width: "w-[72px]", fill: "bg-linear-to-b from-[#cf97b3] via-[#993366] to-[#cf97b3]", text: "text-white" },
  { name: "331-Am", width: "w-[71px]", fill: "bg-linear-to-b from-[#d39a7c] via-[#a14a1e] to-[#c98a68]", text: "text-white" },
  { name: "331-Ivest", width: "w-[85px]", fill: "bg-linear-to-b from-[#ffffe8] to-[#ffff99]", text: "text-black" },
  { name: "Persons", width: "w-[72px]", fill: "bg-linear-to-b from-[#e6effb] to-[#bcd5f5]", text: "text-[#1e4d93]" },
  { name: "Wage", width: "w-[56px]", fill: "bg-linear-to-b from-[#b5ffff] to-[#00ffff]", text: "text-black" },
  { name: "CompVA", width: "w-[71px]", fill: "bg-linear-to-b from-[#f4ffff] to-[#ccffff]", text: "text-black" },
  { name: "331-Чел", width: "w-[78px]", fill: "bg-linear-to-b from-[#d39a7c] via-[#a14a1e] to-[#c98a68]", text: "text-white" },
  { name: "331-Отрасль", width: "w-[114px]", fill: "bg-linear-to-b from-[#d6ea9a] to-[#99cc00]", text: "text-black" },
  { name: "CompGO", width: "w-[75px]", fill: "bg-linear-to-b from-[#ffff9c] to-[#ffff00]", text: "text-black" },
  { name: "331-Model", width: "w-[90px]", fill: "bg-linear-to-b from-[#b5ffff] to-[#00ffff]", text: "text-black" },
  { name: "331", width: "w-[43px]", fill: "bg-linear-to-b from-[#fffff4] to-[#ffffcc]", text: "text-black" },
  { name: "331110", width: "w-[73px]", fill: "bg-linear-to-b from-[#d39a7c] via-[#a14a1e] to-[#c98a68]", text: "text-white" },
  { name: "SP", width: "w-[35px]", fill: "bg-linear-to-b from-[#ffb98a] via-[#ff6600] to-[#ffa366]", text: "text-white" },
  { name: "ОС", width: "w-[35px]", fill: "bg-linear-to-b from-[#d39a7c] via-[#a14a1e] to-[#c98a68]", text: "text-white" },
  { name: "Oil", width: "w-[35px]", fill: "bg-linear-to-b from-[#ff8f8f] via-[#ff1a1a] to-[#ff6666]", text: "text-white" },
  { name: "Steel", width: "w-[52px]", fill: "bg-linear-to-b from-white to-[#ffffb0]", text: "font-bold text-black" },
  { name: "БП", width: "w-[34px]", fill: "bg-linear-to-b from-[#ff8f8f] via-[#ff1a1a] to-[#ff6666]", text: "text-white" },
  { name: "Kod", width: "w-[42px]", fill: "bg-linear-to-b from-[#ffff9c] to-[#ffff00]", text: "text-black" },
  { name: "ВВП", width: "w-[46px]", fill: "bg-linear-to-b from-[#7cd0a4] to-[#00a550]", text: "text-black" },
  { name: "1997", width: "w-[58px]", fill: "bg-linear-to-b from-[#8c8cff] via-[#1a1aff] to-[#5c5cff]", text: "text-white" },
  { name: "1998", width: "w-[49px]", fill: "bg-linear-to-b from-[#e6effb] to-[#bcd5f5]", text: "text-[#1e4d93]" },
  { name: "1999", width: "w-[51px]", fill: "bg-linear-to-b from-[#e6effb] to-[#bcd5f5]", text: "text-[#1e4d93]" },
];

function SheetTabs() {
  return (
    <div className="flex h-[20px] overflow-hidden border-t border-[#7f9dc6] bg-[#8db0de] text-[13px]">
      <div className="flex w-[75px] shrink-0 items-center justify-around bg-[#cfe0f5] px-[4px]">
        {["M2 1v8M10 1L4 5l6 4z", "M8 1L3 5l5 4z", "M3 1l5 4-5 4z", "M10 1v8M2 1l6 4-6 4z"].map((d) => (
          <button type="button" key={d} aria-label="Прокрутка листов"><svg viewBox="0 0 12 10" className="h-[10px] w-[12px]"><path d={d} fill="#17418f" stroke="#17418f" /></svg></button>
        ))}
      </div>
      {sheetTabs.map((t) => (
        <button type="button" key={t.name} className={clsx("relative h-[19px] shrink-0", t.width, t.name === "Steel" && "z-10")}>
          <span className={clsx("absolute inset-0 -skew-x-[24deg] border border-t-0 border-[#8a99ad] border-l-white", t.fill)} />
          <span className={clsx("relative leading-[18px] whitespace-nowrap", t.text)}>{t.name}</span>
        </button>
      ))}
      <div className="ml-[7px] flex flex-1 items-center border-l-4 border-[#dbe7f7] bg-[#7d9ccb] pr-[25px] pl-[8px]">
        <svg viewBox="0 0 7 10" className="h-[10px] w-[7px]"><path d="M6 0v10L0 5z" fill="#2b4570" /></svg>
        <div className="mx-[8px] flex h-[17px] w-[97px] items-center justify-center gap-[2px] rounded-[2px] border border-[#7b90ad] bg-linear-to-b from-[#eceff4] to-[#bcc8d8]">
          <span className="h-[6px] w-px bg-[#667]" /><span className="h-[6px] w-px bg-[#667]" /><span className="h-[6px] w-px bg-[#667]" />
        </div>
        <svg viewBox="0 0 7 10" className="ml-auto h-[10px] w-[7px]"><path d="M1 0v10l6-5z" fill="#2b4570" /></svg>
      </div>
    </div>
  );
}

function StatusBar() {
  return (
    <div className="flex h-[25px] items-center border-t border-[#6f8fbd] bg-linear-to-b from-[#d5e5fa] via-[#bcd5f5] to-[#a5c5ee] text-[12px] text-[#1e3f7c]">
      <span className="ml-[7px] w-[47px] border-r border-[#8fafd8] leading-[20px]">Готово</span>
      <div className="ml-auto flex h-full items-center bg-linear-to-b from-[#9dbdea] to-[#6b90c8] pl-[8px]">
        <button type="button" aria-label="Обычный" className="flex h-[21px] w-[20px] items-center justify-center border border-[#b98a41] bg-[#fdcf80]"><svg viewBox="0 0 15 12" className="h-[12px] w-[15px]"><path d="M.5.500h14v11H.5zM5.500 0v12M10.500 0v12M0 4.500h15M0 8.500h15" fill="#fff" stroke="#666" /></svg></button>
        <button type="button" aria-label="Разметка" className="flex h-[21px] w-[22px] items-center justify-center bg-[#c3d5ee]"><svg viewBox="0 0 15 12" className="h-[12px] w-[15px]"><path d="M.5.500h14v11H.5z" fill="#bbb" stroke="#666" /><path d="M4.500 2.500h6v7h-6z" fill="#fff" stroke="#666" /></svg></button>
        <button type="button" aria-label="Страничный" className="flex h-[21px] w-[22px] items-center justify-center bg-[#c3d5ee]"><svg viewBox="0 0 15 12" className="h-[12px] w-[15px]"><path d="M.5.500h14v11H.5z" fill="#ccc" stroke="#666" /><path d="M5.500 0v7h5V0" fill="#fff" stroke="#666" /></svg></button>
        <span className="ml-[7px] w-[34px]">66%</span>
        <button type="button" aria-label="Уменьшить" className="ml-[5px] flex h-[18px] w-[18px] items-center justify-center rounded-full border border-[#4f6a94] bg-[#e4eaf2]"><span className="h-[2px] w-[9px] bg-[#3e5579]" /></button>
        <label className="relative flex w-[120px] items-center">
          <input type="range" aria-label="Масштаб" defaultValue={30} className="h-[2px] w-full appearance-none bg-[#dfe9f7] opacity-80 [&::-webkit-slider-thumb]:h-[14px] [&::-webkit-slider-thumb]:w-[9px] [&::-webkit-slider-thumb]:appearance-none [&::-webkit-slider-thumb]:rounded-b-[4px] [&::-webkit-slider-thumb]:border [&::-webkit-slider-thumb]:border-[#4f6a94] [&::-webkit-slider-thumb]:bg-[#e8eef7]" />
        </label>
        <button type="button" aria-label="Увеличить" className="mr-[5px] flex h-[18px] w-[18px] items-center justify-center rounded-full border border-[#4f6a94] bg-[#e4eaf2] text-[16px] leading-[16px] font-bold text-[#3e5579]">+</button>
      </div>
    </div>
  );
}

function Scrollbar() {
  return (
    <div className="flex w-[17px] shrink-0 flex-col items-center bg-linear-to-r from-[#6d8fc2] to-[#86a7d6]">
      <span className="h-[4px] w-full bg-[#d5e3f5]" />
      <svg viewBox="0 0 10 6" className="mt-[5px] h-[6px] w-[10px]"><path d="M0 6h10L5 0z" fill="#2b4570" /></svg>
      <span className="mt-[4px] h-[10px] w-[15px] rounded-[2px] border border-[#6c83a6] bg-[#e2e8f1]" />
      <svg viewBox="0 0 10 6" className="mt-auto mb-[8px] h-[6px] w-[10px]"><path d="M0 0h10L5 6z" fill="#2b4570" /></svg>
    </div>
  );
}

/* ---------- taskbar ---------- */

const taskIcons: { name: string; open?: boolean; bright?: boolean; art: ReactNode }[] = [
  { name: "Проводник", open: true, art: <><path d="M4 4h12l3 3h12v24H4z" fill="#f3d778" stroke="#b9962f" /><path d="M7 2h9v8H7zM20 5h9v6h-9z" fill="#fdf3c9" stroke="#c9a94a" /><path d="M4 10h28v21H4z" fill="#f8e49a" /><path d="M8 35V24q0-3 4-3h12q4 0 4 3v11h-5v-8H13v8z" fill="#8ccbe8" stroke="#4b94bb" /></> },
  { name: "FileZilla", art: <><rect x="1" y="2" width="34" height="32" fill="#b30c0c" stroke="#b30c0c" strokeDasharray="3 2" strokeWidth="2" /><path d="M8 29l4-20h11M10 18h9" stroke="#fff" strokeWidth="4" fill="none" /><path d="M18 17h10L18 29h10" stroke="#fff" strokeWidth="3" fill="none" /></> },
  { name: "Outlook", art: <><rect x="2" y="3" width="31" height="30" fill="#fff7e0" stroke="#e29a1e" strokeWidth="3" /><circle cx="15" cy="14" r="8" fill="#fffbf0" stroke="#d78f1d" strokeWidth="2" /><path d="M15 9v6h4" stroke="#a76a10" strokeWidth="2" fill="none" /><path d="M15 23h14v8H15z" fill="#ffe2a4" stroke="#d78f1d" /></> },
  { name: "Firefox", art: <><circle cx="18" cy="18" r="16" fill="#e66000" /><circle cx="20" cy="14" r="11" fill="#2158a8" /><path d="M3 10C6 14 6 8 10 7c-1 5 6 4 8 7-5 0-5 4-4 6 3 5 10 4 14-1 2 10-9 15-16 12C4 28 1 20 3 10z" fill="#ff9500" /><path d="M30 8c5 7 5 16-2 22 4-8 4-15 2-22z" fill="#ffcb00" /></> },
  { name: "Chrome", art: <><circle cx="18" cy="18" r="16" fill="#fcc934" /><path d="M18 18L4 10A16 16 0 0 1 32 10z" fill="#ea4335" /><path d="M18 18L4 10A16 16 0 0 0 17 34l6-13z" fill="#34a853" /><circle cx="18" cy="18" r="7.500" fill="#fff" /><circle cx="18" cy="18" r="6" fill="#4a8af4" /></> },
  { name: "Удаленный рабочий стол", art: <><path d="M12 2l20 3-3 17-19-3z" fill="#6c7780" stroke="#d8dde2" /><path d="M14 5l15 2-2 12-15-2z" fill="#3cabd0" /><path d="M18 12l11-4-2 11-15-2z" fill="#2189b3" /><path d="M19 22l8 2-1 5-9-1z" fill="#8c979f" /><path d="M3 26l15-1 3 6-14 3z" fill="#dfe3e6" stroke="#888" /></> },
  { name: "Notepad++", open: true, art: <><rect x="4" y="5" width="25" height="28" fill="#f2f5f1" stroke="#999" /><path d="M6 3v4M10 3v4M14 3v4M18 3v4M22 3v4" stroke="#aaa" /><path d="M5 18h23v14H5z" fill="#7fd02c" /><path d="M9 17q5-5 8 0t8-1M11 22q8-3 6 3t-7 4M12 25l10-8" stroke="#1c5e12" strokeWidth="2" fill="none" /><path d="M34 3L27 26l-2 3V25L31 2z" fill="#e9a63a" stroke="#8c5a12" /></> },
  { name: "Монитор", art: <><path d="M5 4l22-2 3 20-21 3z" fill="#c8ced3" stroke="#888" /><path d="M8 7l17-2 2 14-16 2z" fill="#123816" /><path d="M10 14l3-5 3 8 3-9 3 7 3-5" stroke="#46d34c" fill="none" /><path d="M16 25l8-1 6 8-18 2z" fill="#d5d9dc" /></> },
  { name: "Сканер", art: <><path d="M2 18l14-8 18 6-2 10-14 6-16-6z" fill="#e3e5e6" stroke="#888" /><path d="M4 18l13-7 15 5-13 6z" fill="#b7bcc0" /><path d="M8 3l16 3 4 8-18-3z" fill="#d9b96b" stroke="#8f7430" /></> },
  { name: "Skype", open: true, art: <><path d="M18 2c11 0 17 8 15 17 3 9-6 16-13 13C9 34 1 26 3 17 0 8 9-1 18 2z" fill="#14aef0" /><path d="M24 12c-3-5-12-4-12 0 0 5 12 3 12 9 0 5-11 5-13 0" stroke="#fff" strokeWidth="4" fill="none" /><circle cx="29" cy="28" r="7" fill="#fdb913" /><path d="M27 25h4l-2 3c3 0 2 4-2 3" stroke="#333" strokeWidth="1.500" fill="none" /></> },
  { name: "Excel", open: true, bright: true, art: <><path d="M8 3h22l4 4v26H8z" fill="#f1f7ef" stroke="#7ba56f" /><path d="M20 10h11v5H20zM20 17h11v5H20zM20 24h11v6H20zM12 26h7v4h-7z" fill="#6fae54" /><path d="M3 7l18-3v20L3 26z" fill="#dcead6" stroke="#4b8a37" /><path d="M8 9l8 13M16 8L7 23" stroke="#2f7a26" strokeWidth="3.500" /></> },
  { name: "Word", open: true, art: <><path d="M5 3h22l4 4v27H5z" fill="#eef3fc" stroke="#8fa5cd" /><path d="M28 13h-3M28 18h-3M28 23h-3M9 29h17" stroke="#6b8ccb" strokeWidth="1.500" /><path d="M3 6l21-2v21L3 26z" fill="#2f5fb5" stroke="#1f428a" /><path d="M7 10l3 12 4-11 4 11 3-13" stroke="#fff" strokeWidth="2.500" fill="none" /></> },
];

function TrayIcon({ children, label }: { children: ReactNode; label: string }) {
  return <button type="button" aria-label={label}><svg viewBox="0 0 18 18" className="h-[18px] w-[18px]">{children}</svg></button>;
}

function Taskbar() {
  return (
    <footer className="flex h-[46px] items-center border-t border-[#46505c] bg-[#080c12] text-white">
      <button type="button" aria-label="Пуск" className="mr-[6px] w-[62px] pl-[11px]">
        <svg viewBox="0 0 42 42" className="h-[42px] w-[42px]">
          <defs><radialGradient id="start" cx=".5" cy=".8"><stop offset="0" stopColor="#58d3f5" /><stop offset=".6" stopColor="#1c5f9f" /><stop offset="1" stopColor="#123a63" /></radialGradient></defs>
          <circle cx="21" cy="21" r="20" fill="url(#start)" stroke="#5e86aa" /><ellipse cx="21" cy="11" rx="15" ry="8" fill="#fff" opacity=".25" />
          <path d="M11 13q5-4 9-1l-2 8q-4-3-9 0z" fill="#f0592b" /><path d="M22 13q5 3 9 0l-2 8q-5 3-9 0z" fill="#8cc63f" />
          <path d="M9 22q4-3 9 0l-2 8q-5-3-9 0z" fill="#3fa9f5" /><path d="M20 22q4 3 9 0l-2 8q-5 3-9 0z" fill="#fcc21b" />
        </svg>
      </button>
      <div className="flex gap-[3px]">
        {taskIcons.map((t) => (
          <button
            type="button"
            key={t.name}
            aria-label={t.name}
            className={clsx("flex h-[43px] w-[63px] items-center justify-center rounded-[3px] border", t.bright ? "border-[#c9ced3] bg-linear-to-br from-[#a9aeb2] to-[#70767b]" : t.open ? "border-[#7f868d] bg-linear-to-br from-[#676d73] via-[#30353b] to-[#22272c]" : "border-transparent")}
          >
            <svg viewBox="0 0 36 36" className="h-[36px] w-[36px]">{t.art}</svg>
          </button>
        ))}
      </div>
      <div className="ml-auto flex items-center gap-[11px]">
        <span className="mr-[8px] text-[12px] text-[#d7dde3]">RU</span>
        <TrayIcon label="TeamViewer"><path d="M2 1h13v13H2z" fill="#1b8ce8" /><circle cx="8" cy="7" r="5" fill="#fff" /><path d="M5 7h6M5 7l2-2M5 7l2 2M11 7L9 5M11 7L9 9" stroke="#1b6bc0" /><path d="M10 12h8v5h-8z" fill="#6bd51e" /></TrayIcon>
        <span className="w-[18px] font-['Liberation_Serif',serif] text-[11px] font-bold text-[#3c87ad] italic">Ext²</span>
        <TrayIcon label="Skype"><path d="M1 1h12v12H1z" fill="#7cb82f" /><circle cx="11" cy="11" r="6.500" fill="#fdb913" /><path d="M9 8h4l-2 3c3 0 2 4-2 3" stroke="#222" strokeWidth="1.300" fill="none" /></TrayIcon>
        <TrayIcon label="Avast"><circle cx="9" cy="9" r="8.500" fill="#ff8c1a" /><circle cx="8" cy="9" r="3.500" fill="none" stroke="#fff" strokeWidth="2.500" /><path d="M12 5v8l3 1" stroke="#fff" strokeWidth="2" fill="none" /></TrayIcon>
        <span className="flex h-[14px] w-[18px] items-center justify-center bg-[#e8101c] text-[9px] font-bold italic">ATI</span>
        <TrayIcon label="Центр поддержки"><path d="M3 1v16M4 3h6l1 2h5v7h-5l-1-2H4z" fill="#f4f4f4" stroke="#f4f4f4" strokeWidth="1.500" /></TrayIcon>
        <TrayIcon label="Звук"><path d="M2 7h3l5-5v14l-5-5H2z" fill="#d8664a" /><path d="M12 6q2 3 0 6M14 4q4 5 0 10" stroke="#7c3b2c" fill="none" /></TrayIcon>
        <TrayIcon label="Сеть"><path d="M4 5h13v8H4zM8 16h6M11 13v3" fill="#111" stroke="#f1f1f1" strokeWidth="1.500" /><path d="M2 1h4v6H2zM3.500 7v9H7" fill="#ddd" stroke="#f1f1f1" /></TrayIcon>
        <TrayIcon label="Громкость"><path d="M2 6h3l4-4v14l-4-4H2z" fill="#f4f4f4" /><path d="M11 6q2 3 0 6M14 4q4 5 0 10" stroke="#f4f4f4" fill="none" strokeWidth="1.300" /></TrayIcon>
        <time className="ml-[6px] w-[70px] text-center text-[12px] leading-[20px]">22:44<br />01.02.2016</time>
        <button type="button" aria-label="Показать рабочий стол" className="h-[46px] w-[13px] border border-[#59636d] bg-[#22282f]" />
      </div>
    </footer>
  );
}

export default function App() {
  return (
    <main className="relative flex h-screen w-full flex-col overflow-hidden bg-white font-['Open_Sans','Noto_Sans',sans-serif]">
      <OfficeButton />
      <TitleBar />
      <MenuTabs />
      <Ribbon />
      <FormulaBar />
      <div className="flex min-h-0 flex-1">
        <div className="relative min-w-0 flex-1 overflow-hidden">
          <SheetTable />
          {charts.map((c) => <PriceChart key={c.title} spec={c} />)}
          <div className="absolute top-[205px] left-[469px] h-[22px] rounded-[2px] border border-[#767676] bg-linear-to-b from-white to-[#dfe4f0] px-[3px] text-[14px] leading-[20px] text-[#575757] shadow-md">10713</div>
        </div>
        <Scrollbar />
      </div>
      <SheetTabs />
      <StatusBar />
      <Taskbar />
    </main>
  );
}
